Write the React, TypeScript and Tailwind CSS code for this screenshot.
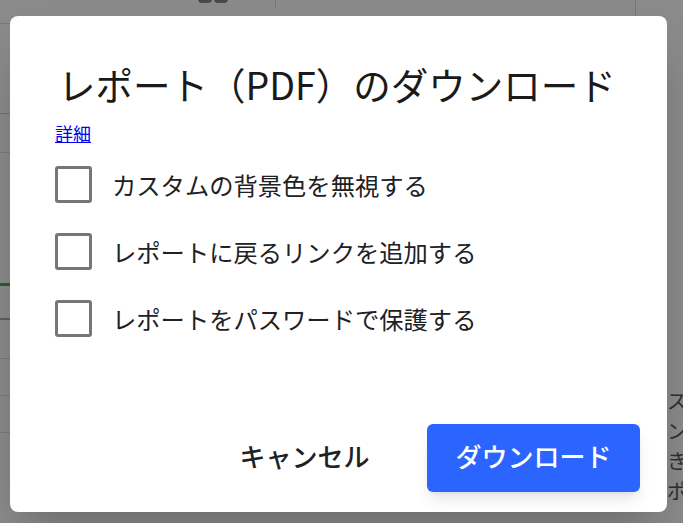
import { useState } from 'react';

const options = [
  'カスタムの背景色を無視する',
  'レポートに戻るリンクを追加する',
  'レポートをパスワードで保護する',
];

export default function App() {
  const [checked, setChecked] = useState<boolean[]>([false, false, false]);

  const toggle = (i: number) => {
    setChecked(prev => prev.map((v, j) => (j === i ? !v : v)));
  };

  return (
    <div
      className="relative h-[523px] w-full overflow-hidden bg-[#8b8b8c]"
      style={{ fontFamily: '"Noto Sans CJK JP", "Noto Sans", sans-serif' }}
    >
      {/* dimmed page behind the dialog */}
      <div className="flex h-full">
        <div className="flex w-[10px] flex-col">
          <div className="mt-[23px] h-[1px] bg-[#7a7a7b]" />
          <div className="mt-[89px] h-[1px] bg-[#6f6f70]" />
          <div className="mt-[38px] h-[1px] bg-[#7a7a7b]" />
          <div className="mt-[130px] h-[3px] bg-[#2f5d30]" />
          <div className="mt-[32px] h-[2px] bg-[#5f5f60]" />
          <div className="mt-[38px] h-[1px] bg-[#7a7a7b]" />
          <div className="mt-[36px] h-[1px] bg-[#7a7a7b]" />
          <div className="mt-[36px] h-[1px] bg-[#7a7a7b]" />
        </div>
        <div className="flex flex-1">
          <div className="ml-[188px] mt-[-4px] flex h-[7px] gap-[2px]">
            <div className="w-[14px] rounded-b-sm bg-[#4a4a4b]" />
            <div className="w-[14px] rounded-b-sm bg-[#4a4a4b]" />
          </div>
          <div className="ml-[47px] h-[8px] w-[1px] bg-[#777778]" />
          <div className="ml-[359px] h-[16px] w-[1px] bg-[#777778]" />
        </div>
        <div className="flex w-[16px] flex-col overflow-hidden pt-[386px] text-[20px] leading-[30px] text-[#2e2e2e]">
          <span className="whitespace-nowrap">スパ</span>
          <span className="whitespace-nowrap">ンク</span>
          <span className="whitespace-nowrap">きま</span>
          <span className="whitespace-nowrap">ポー</span>
        </div>
      </div>

      <div className="absolute left-[10px] top-[16px] flex h-[496px] w-[657px] flex-col rounded-lg bg-white pl-[45px] pr-[27px] shadow-2xl">
        <h1 className="mt-[40px] whitespace-nowrap pl-[3px] text-[37.5px] font-normal leading-[56px] text-[#1a1a1a]">
          レポート（PDF）のダウンロード
        </h1>
        <a href="#" className="mt-[8px] w-fit text-[18px] leading-[26px] text-[#0000ee] underline">
          詳細
        </a>
        <div className="mt-[20px] flex flex-col gap-[30px]">
          {options.map((label, i) => (
            <label key={label} className="flex cursor-pointer items-center gap-[20px]">
              <button
                type="button"
                onClick={() => toggle(i)}
                className="flex h-[37px] w-[37px] shrink-0 items-center justify-center rounded-[3px] border-[3px] border-[#767676] bg-white"
              >
                {checked[i] && (
                  <svg viewBox="0 0 24 24" className="h-6 w-6 text-[#767676]" fill="none" stroke="currentColor" strokeWidth="3">
                    <path d="M5 12l5 5 9-10" />
                  </svg>
                )}
              </button>
              <span className="text-[24.3px] leading-[36px] text-[#202124]">{label}</span>
            </label>
          ))}
        </div>
        <div className="mt-auto mb-[20px] flex justify-end gap-[16px]">
          <button className="h-[68px] w-[213px] rounded-md pb-[6px] text-[26px] font-medium text-[#202124]">
            キャンセル
          </button>
          <button className="h-[68px] w-[213px] rounded-md bg-[#2b64ff] pb-[6px] text-[26px] font-medium text-white shadow-lg">
            ダウンロード
          </button>
        </div>
      </div>
    </div>
  );
}
